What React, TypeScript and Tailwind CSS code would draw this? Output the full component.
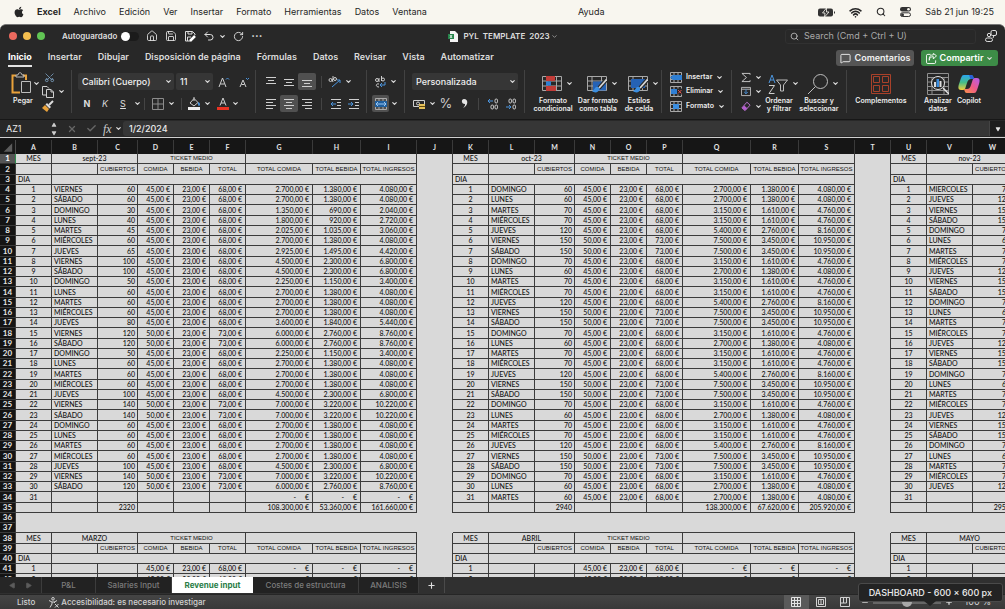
import React from 'react';
import { ChevronDown, Search, House, Save, Undo2, RotateCw, MessageSquare, Wifi, Scissors, Play, Plus, Minus, X, Check } from 'lucide-react';
import { FaApple } from 'react-icons/fa';

const MENUS = ['Archivo', 'Edición', 'Ver', 'Insertar', 'Formato', 'Herramientas', 'Datos', 'Ventana'];
const RIBBON_TABS = ['Inicio', 'Insertar', 'Dibujar', 'Disposición de página', 'Fórmulas', 'Datos', 'Revisar', 'Vista', 'Automatizar'];
const WEEK = ['LUNES', 'MARTES', 'MIÉRCOLES', 'JUEVES', 'VIERNES', 'SÁBADO', 'DOMINGO'];

interface Block {
  month: string;
  nextMonth: string;
  firstDay: number;
  covers: number[];
  // days whose average food ticket is 50 instead of 45
  highDays: number[];
  narrow?: boolean;
}

const BLOCKS: Block[] = [
  {
    month: 'sept-23',
    nextMonth: 'MARZO',
    firstDay: 4,
    covers: [60, 60, 30, 40, 45, 60, 65, 100, 100, 50, 60, 60, 60, 80, 120, 120, 50, 60, 60, 60, 100, 140, 140, 60, 60, 60, 60, 100, 140, 120],
    highDays: [15, 16, 22, 23, 29, 30],
  },
  {
    month: 'oct-23',
    nextMonth: 'ABRIL',
    firstDay: 6,
    covers: [60, 60, 70, 70, 120, 150, 150, 70, 60, 70, 70, 120, 150, 150, 70, 60, 70, 70, 120, 150, 150, 70, 60, 70, 70, 120, 150, 150, 70, 60, 60],
    highDays: [6, 7, 13, 14, 20, 21, 27, 28],
  },
  {
    month: 'nov-23',
    nextMonth: 'MAYO',
    firstDay: 2,
    covers: [70, 120, 150, 150, 70, 60, 70, 70, 120, 150, 150, 70, 60, 70, 70, 120, 150, 150, 70, 60, 70, 70, 120, 150, 150, 70, 60, 70, 70, 120],
    highDays: [3, 4, 10, 11, 17, 18, 24, 25],
    narrow: true,
  },
];

const COLUMNS: [string, string][] = [
  ['A', 'w-[36px]'], ['B', 'w-[46px]'], ['C', 'w-[40px]'], ['D', 'w-[36px]'], ['E', 'w-[36px]'], ['F', 'w-[36px]'],
  ['G', 'w-[67px]'], ['H', 'w-[48px]'], ['I', 'w-[56px]'], ['J', 'w-[36px]'],
  ['K', 'w-[36px]'], ['L', 'w-[46px]'], ['M', 'w-[40px]'], ['N', 'w-[36px]'], ['O', 'w-[36px]'], ['P', 'w-[36px]'],
  ['Q', 'w-[68px]'], ['R', 'w-[48px]'], ['S', 'w-[56px]'], ['T', 'w-[36px]'],
  ['U', 'w-[36px]'], ['V', 'w-[46px]'], ['W', 'w-[40px]'],
];

const money = (n: number) => {
  if (n === 0) return '-\u00a0\u00a0\u00a0\u00a0\u00a0€';
  return n.toString().replace(/\B(?=(\d{3})+$)/g, '.') + ',00 €';
};

const sum = (list: number[]) => list.reduce((a, b) => a + b, 0);

/* ---------- Sheet ---------- */

const Cell = ({ children, span, align = 'center', heading }: any) => {
  const alignClass = align === 'left' ? 'text-left pl-[2px]' : align === 'right' ? 'text-right pr-[2px]' : align === 'money' ? 'text-right pr-[3px]' : 'text-center';
  return <td colSpan={span} className={`border-r border-b border-[#3c3c3c] ${alignClass} ${heading ? "font-['Liberation_Sans',sans-serif] text-[6px]" : ''}`}>{children}</td>;
};

const DayCells = ({ block, day, empty }: { block: Block; day: number; empty: boolean }) => {
  const covers = empty ? 0 : block.covers[day - 1] || 0;
  const food = block.highDays.includes(day) && !empty ? 50 : 45;
  let name = covers ? WEEK[(block.firstDay + day - 1) % 7] : '';
  if (block.narrow && day === 1 && !empty) name = 'MIERCOLES';
  const hasTicket = covers > 0 || empty;
  return (
    <>
      <Cell>{day}</Cell>
      <Cell align="left">{name}</Cell>
      <Cell align="right">{covers || ''}</Cell>
      {!block.narrow && (
        <>
          <Cell align="money">{hasTicket && money(food)}</Cell>
          <Cell align="money">{hasTicket && money(23)}</Cell>
          <Cell align="money">{hasTicket && money(food + 23)}</Cell>
          <Cell align="money">{money(covers * food)}</Cell>
          <Cell align="money">{money(covers * 23)}</Cell>
          <Cell align="money">{money(covers * (food + 23))}</Cell>
        </>
      )}
    </>
  );
};

const BlockCells = ({ block, row }: { block: Block; row: number }) => {
  const local = row > 37 ? row - 37 : row;
  if (row === 36) return <td colSpan={block.narrow ? 3 : 9} />;
  if (row === 37) return <td colSpan={block.narrow ? 3 : 9} className="border-b border-[#3c3c3c]" />;
  if (local === 1) {
    return (
      <>
        <Cell>MES</Cell>
        <Cell span={2}>{row === 1 ? block.month : block.nextMonth}</Cell>
        {!block.narrow && <><Cell span={3} heading>TICKET MEDIO</Cell><Cell span={3} /></>}
      </>
    );
  }
  if (local === 2) {
    const heads = ['', '', 'CUBIERTOS', 'COMIDA', 'BEBIDA', 'TOTAL', 'TOTAL COMIDA', 'TOTAL BEBIDA', 'TOTAL INGRESOS'];
    return <>{heads.slice(0, block.narrow ? 3 : 9).map((h, i) => <Cell key={i} heading>{h}</Cell>)}</>;
  }
  if (local === 3) {
    return <><Cell align="left">DIA</Cell><Cell span={block.narrow ? 2 : 8} /></>;
  }
  if (local === 35) {
    const covers = sum(block.covers);
    const food = sum(block.covers.map((c, i) => c * (block.highDays.includes(i + 1) ? 50 : 45)));
    return (
      <>
        <Cell /><Cell />
        <Cell align="right">{covers}</Cell>
        {!block.narrow && (
          <>
            <Cell /><Cell /><Cell />
            <Cell align="money">{money(food)}</Cell>
            <Cell align="money">{money(covers * 23)}</Cell>
            <Cell align="money">{money(food + covers * 23)}</Cell>
          </>
        )}
      </>
    );
  }
  return <DayCells block={block} day={local - 3} empty={row > 37} />;
};

const Sheet = () => (
  <div className="flex-1 min-h-0 overflow-hidden bg-[#d9d9d9]">
    <table className="table-fixed w-[1013px] border-separate border-spacing-0 font-['Lato','Liberation_Sans',sans-serif] text-[7px] leading-[9px] font-medium text-[#111] whitespace-nowrap">
      <colgroup>
        <col className="w-[16px]" />
        {COLUMNS.map(([name, width]) => <col key={name} className={width} />)}
      </colgroup>
      <thead>
        <tr className="h-[14px] bg-[#161616] text-[#e4e4e4]">
          <th className="border-r border-[#4a4a4a]" aria-label="Seleccionar todo">
            <svg viewBox="0 0 16 14" className="block w-[15px] h-[14px]"><path d="M13 3v9H4z" fill="#5c5c5c" /></svg>
          </th>
          {COLUMNS.map(([name]) => <th key={name} scope="col" className="border-r border-[#3a3a3a] font-bold">{name}</th>)}
        </tr>
      </thead>
      <tbody>
        {Array.from({ length: 42 }, (_, i) => i + 1).map((row) => (
          <tr key={row} className={row % 4 === 2 ? 'h-[11px]' : 'h-[10px]'}>
            <th scope="row" className={`border-r border-b text-[8px] font-bold ${row === 1 ? 'bg-[#555] text-white border-b-[#333] border-r-[#2f8f4e]' : 'bg-[#141414] text-[#e4e4e4] border-[#3a3a3a]'}`}>{row}</th>
            {BLOCKS.map((block, i) => (
              <React.Fragment key={block.month}>
                <BlockCells block={block} row={row} />
                {i < 2 && <td className={row === 36 || row === 37 ? '' : 'border-r border-[#3c3c3c]'} />}
              </React.Fragment>
            ))}
          </tr>
        ))}
      </tbody>
    </table>
  </div>
);

/* ---------- Ribbon pieces ---------- */

const Chevron = ({ className = '' }: { className?: string }) => (
  <ChevronDown size={7} strokeWidth={4} className={`shrink-0 text-[#dedede] ${className}`} />
);

const Sep = () => <div className="w-px h-3 bg-[#444] shrink-0" />;

const Group = ({ width, children, className = '' }: any) => (
  <div className={`shrink-0 border-r border-[#424242] h-[43px] ${width} ${className}`}>{children}</div>
);

const Tool = ({ label, width = 'w-[18px]', active, children }: any) => (
  <button aria-label={label} className={`${width} h-[17px] shrink-0 flex items-center justify-center rounded-[2px] ${active ? 'bg-[#505050]' : ''}`}>{children}</button>
);

const Dropdown = ({ label, value, width }: any) => (
  <div className={`relative h-[17px] ${width}`}>
    <select aria-label={label} className="block appearance-none w-full h-[17px] leading-[17px] rounded-[2px] bg-[#363636] text-[#f0f0f0] text-[9px] font-medium pl-1 outline-none">
      <option>{value}</option>
    </select>
    <Chevron className="absolute right-[2px] top-[5px] pointer-events-none" />
  </div>
);

const BigTool = ({ lines, icon, width, chevron }: any) => (
  <button className={`flex flex-col items-center shrink-0 ${width}`}>
    <span className={`flex items-center gap-1 h-[27px] ${chevron ? 'pl-2' : ''}`}>{icon}{chevron && <Chevron />}</span>
    {lines.map((line: string) => <span key={line} className="text-[7px] leading-[8px] font-semibold text-[#ececec] whitespace-nowrap">{line}</span>)}
  </button>
);

const Lines = ({ rows }: { rows: [number, number, number][] }) => (
  <svg viewBox="0 0 12 12" className="w-3 h-3" stroke="#cfcfcf" strokeWidth="1">
    {rows.map(([x1, x2, y]) => <path key={y} d={`M${x1} ${y}H${x2}`} />)}
  </svg>
);

const IndentIcon = ({ out }: { out?: boolean }) => (
  <svg viewBox="0 0 12 12" className="w-3 h-3" fill="none" stroke="#cfcfcf">
    <path d="M1 1.500h10M7 4.500h4M7 7.500h4M1 10.500h10" />
    <path d={out ? 'M6 6H1m2-2L1 6l2 2' : 'M0 6h5M3 4l2 2-2 2'} stroke="#4b94dc" />
  </svg>
);

const GridIcon = ({ kind }: { kind: 'cond' | 'table' | 'style' }) => (
  <svg viewBox="0 0 20 18" className="w-5 h-[18px]" fill="none">
    <path d="M.5 1.500h19v14H.5zM.5 6h19M.5 11h19M5 1.500v14M14.500 1.500v14" stroke="#a8a8a8" />
    {kind === 'cond' && <><path d="M4 1h9v5H4zM4 11h10v5H4z" fill="#c23c38" /><path d="M4 6.500h5v4H4z" fill="#2f7fd4" /></>}
    {kind === 'table' && <path d="M6 6.500h13v9H6z" fill="#2562b5" />}
    {kind === 'style' && <path d="M3 4h14v9H3z" fill="#2562b5" />}
    {kind !== 'cond' && <>
      <path d="M19 5 12 13" stroke="#282828" strokeWidth="4" />
      <path d="M19.500 4.500 12 13" stroke="#d8d8d8" strokeWidth="1.800" />
      <path d="M11 12c-3-1-3 3-6 4 3 3 8 1 7-3z" fill="#3b8ee0" />
    </>}
  </svg>
);

const CellsIcon = ({ kind }: { kind: number }) => (
  <svg viewBox="0 0 12 11" className="w-3 h-[11px]" fill="none">
    <path d="M.5.5h11v10H.5zM.5 3.500h11M.5 7.500h11M4 .5v10M8 .5v10" stroke="#a8a8a8" />
    {kind === 0 && <path d="M3 3h9v5H3L0 5.500z" fill="#2f7fd4" />}
    {kind === 1 && <><path d="M1 3h6v5H1z" fill="#2f7fd4" /><path d="M7 2.500h5v6H7z" fill="#282828" /><path d="m8 4 3.500 3.500m0-3.500L8 7.500" stroke="#e0524a" /></>}
    {kind === 2 && <path d="M3 3h6v5H3z" fill="#3b8ee0" />}
  </svg>
);

const DecimalIcon = ({ more }: { more?: boolean }) => (
  <svg viewBox="0 0 12 12" className="w-3 h-3" fill="none" stroke="#cfcfcf">
    <rect x="8" y="1" width="2.500" height="4" rx="1.200" />
    <rect x="8" y="7" width="2.500" height="4" rx="1.200" />
    {more ? <rect x="4" y="7" width="2.500" height="4" rx="1.200" /> : <rect x="4" y="1" width="2.500" height="4" rx="1.200" />}
    <path d={more ? 'M6 3H1m2-2L1 3l2 2' : 'M1 9h5M4 7l2 2-2 2'} stroke="#4b94dc" />
  </svg>
);

const Ribbon = () => (
  <div className="flex pt-[2px] h-[51px] shrink-0 overflow-hidden">
    <Group width="w-[72px]" className="flex pl-[8px]">
      <button className="flex flex-col items-center w-[30px]">
        <span className="flex items-center gap-[2px] h-[26px] pl-1">
          <svg viewBox="0 0 20 22" className="w-5 h-[22px]" fill="none">
            <path d="M5 3.500H1.500v17H9M12 3.500h3V8" stroke="#e9a23b" strokeWidth="2" />
            <path d="M5 5V3h2c0-3 4-3 4 0h2v2z" stroke="#bdbdbd" />
            <path d="M10.500 9.500h9v11h-9z" stroke="#bdbdbd" fill="#282828" />
          </svg>
          <Chevron />
        </span>
        <span className="text-[7px] leading-[10px] font-semibold text-[#ececec]">Pegar</span>
      </button>
      <div className="flex flex-col pl-1 justify-between">
        <button aria-label="Cortar" className="h-[14px] pl-[2px]"><Scissors size={11} strokeWidth={1.500} className="-rotate-90 text-[#8db7dd]" /></button>
        <button aria-label="Copiar" className="h-[14px] flex items-center gap-1">
          <svg viewBox="0 0 12 12" className="w-3 h-3" fill="none" stroke="#cfcfcf"><path d="M4 9H.5V.5H5L7 2.500" /><path d="M4.500 3.500H9l2.500 2.500v5.500h-7zM9 3.500V6h2.500" /></svg>
          <Chevron />
        </button>
        <button aria-label="Copiar formato" className="h-[14px]">
          <svg viewBox="0 0 12 12" className="w-3 h-3"><path d="m11 1-4 4" stroke="#ddd" strokeWidth="2" /><path d="m5 3 4 4-1.500 1.500-4-4z" fill="#ddd" /><path d="m3 5 4 4-2 3-5-4z" fill="#e9a23b" /></svg>
        </button>
      </div>
    </Group>

    <Group width="w-[184px]" className="pl-[6px] flex flex-col gap-[5px]">
      <div className="flex items-center gap-[2px] pt-[3px]">
        <Dropdown label="Fuente" value="Calibri (Cuerpo)" width="w-[96px]" />
        <Dropdown label="Tamaño" value="11" width="w-[37px]" />
        <Tool label="Aumentar tamaño">
          <svg viewBox="0 0 12 12" className="w-3 h-3" fill="none"><path d="m1 11 3.500-9L8 11M2.500 8h4" stroke="#cfcfcf" /><path d="m8 3.500 1.500-1.500L11 3.500" stroke="#4b94dc" /></svg>
        </Tool>
        <Tool label="Reducir tamaño">
          <svg viewBox="0 0 12 12" className="w-3 h-3" fill="none"><path d="m2 11 3-7 3 7M3.500 8.500h3" stroke="#cfcfcf" /><path d="m8 2 1.500 1.500L11 2" stroke="#4b94dc" /></svg>
        </Tool>
      </div>
      <div className="flex items-center text-[9px] text-[#dedede]">
        <Tool label="Negrita"><b>N</b></Tool>
        <Tool label="Cursiva"><i>K</i></Tool>
        <Tool label="Subrayado"><u>S</u></Tool>
        <Tool label="Más subrayados" width="w-[10px]"><Chevron /></Tool>
        <div className="pl-[2px]"><Sep /></div>
        <Tool label="Bordes" width="w-[36px]">
          <svg viewBox="0 0 12 12" className="w-3 h-3 mr-1" fill="none" stroke="#8c8c8c"><path d="M.5.5h11v11H.5zM6 .5v11M.5 6h11" /></svg><Chevron />
        </Tool>
        <Sep />
        <Tool label="Color de relleno" width="w-[34px]">
          <svg viewBox="0 0 13 13" className="w-[13px] h-[13px] mr-[3px]" fill="none"><path d="M6 1.500 2 6l4 3 4-3.500zM6 4V0" stroke="#cfcfcf" /><path d="M10 5c3 1 2 4 1 4s-1-2-1-4z" fill="#4b94dc" /><path d="M0 10h12v3H0z" fill="#eee" /></svg><Chevron />
        </Tool>
        <Tool label="Color de fuente" width="w-[24px]">
          <svg viewBox="0 0 12 13" className="w-3 h-[13px] mr-[3px]" fill="none"><path d="M3 8.500 6 1l3 7.500M4 6h4" stroke="#cfcfcf" /><path d="M0 10h12v3H0z" fill="#ea3323" /></svg><Chevron />
        </Tool>
      </div>
    </Group>

    <Group width="w-[111px]" className="pl-[6px] flex flex-col gap-[5px]">
      <div className="flex items-center pt-[3px]">
        <Tool label="Alinear arriba"><Lines rows={[[1, 11, 1.5], [3, 9, 4.5], [1, 11, 7.5]]} /></Tool>
        <Tool label="Alinear en el medio"><Lines rows={[[1, 11, 3.5], [3, 9, 6.5], [1, 11, 9.5]]} /></Tool>
        <Tool label="Alinear abajo" active><Lines rows={[[1, 11, 4.5], [3, 9, 7.5], [1, 11, 10.5]]} /></Tool>
        <div className="px-[5px]"><Sep /></div>
        <Tool label="Orientación" width="w-[26px]">
          <svg viewBox="0 0 13 12" className="w-[13px] h-3 mr-1" fill="none"><circle cx="2.500" cy="4" r="1.500" stroke="#cfcfcf" /><circle cx="7" cy="3" r="1.500" stroke="#cfcfcf" /><path d="m4 3 1 3M5 0v4" stroke="#cfcfcf" /><path d="m4 11 8-7M9 4h3v3" stroke="#4b94dc" /></svg><Chevron />
        </Tool>
      </div>
      <div className="flex items-center">
        <Tool label="Alinear a la izquierda"><Lines rows={[[1, 11, 1.5], [1, 8, 4.5], [1, 11, 7.5], [1, 8, 10.5]]} /></Tool>
        <Tool label="Centrar" active><Lines rows={[[1, 11, 1.5], [3, 9, 4.5], [1, 11, 7.5], [3, 9, 10.5]]} /></Tool>
        <Tool label="Alinear a la derecha"><Lines rows={[[1, 11, 1.5], [4, 11, 4.5], [1, 11, 7.5], [4, 11, 10.5]]} /></Tool>
        <div className="px-[5px]"><Sep /></div>
        <Tool label="Disminuir sangría"><IndentIcon out /></Tool>
        <Tool label="Aumentar sangría"><IndentIcon /></Tool>
      </div>
    </Group>

    <Group width="w-[38px]" className="pl-[5px] flex flex-col gap-[5px]">
      <div className="flex items-center pt-[3px]">
        <Tool label="Ajustar texto" width="w-[26px]">
          <svg viewBox="0 0 12 12" className="w-3 h-3 mr-1" fill="none" stroke="#cfcfcf"><circle cx="3" cy="4" r="1.500" /><path d="M5 2v4M7.500 0v5" /><circle cx="9" cy="3.500" r="1.500" /><path d="M5 8c-3-1-4 3 0 3" /><path d="M11 6v3H6m2-2L6 9l2 2" stroke="#4b94dc" /></svg><Chevron />
        </Tool>
      </div>
      <Tool label="Combinar y centrar" width="w-[26px]">
        <span className="flex items-center justify-center w-[17px] h-[17px] mr-[2px] bg-[#505050] rounded-[2px]">
          <svg viewBox="0 0 12 12" className="w-3 h-3" fill="none"><path d="M.5.5h11v11H.5zM4 .5v11M8 .5v11" stroke="#aaa" /><path d="M0 3h12v6H0z" fill="#1f5f9f" /><path d="M1 6h10M3 4 1 6l2 2M9 4l2 2-2 2" stroke="#9cc8f2" /></svg>
        </span>
        <Chevron />
      </Tool>
    </Group>

    <Group width="w-[120px]" className="pl-[7px] flex flex-col gap-[5px]">
      <div className="pt-[3px]"><Dropdown label="Formato de número" value="Personalizada" width="w-[106px]" /></div>
      <div className="flex items-center text-[#cfcfcf]">
        <Tool label="Moneda" width="w-[25px]">
          <svg viewBox="0 0 12 12" className="w-3 h-3 mr-1" fill="none"><path d="M.5 2.500h11v6H.5z" stroke="#cfcfcf" /><circle cx="5" cy="5.500" r="1.500" stroke="#cfcfcf" /><path d="M6 6h6v5H6z" fill="#e6c15a" /><path d="M6 8.500h6" stroke="#614a10" /></svg><Chevron />
        </Tool>
        <Tool label="Porcentaje"><span className="text-[13px]">%</span></Tool>
        <Tool label="Estilo millares"><svg viewBox="0 0 8 12" className="w-2 h-3"><path d="M4 1c5 0 4 7-1 9 2-2 2-3 2-4-4 0-4-5-1-5z" fill="#e4e4e4" /></svg></Tool>
        <div className="px-[5px]"><Sep /></div>
        <Tool label="Aumentar decimales"><DecimalIcon more /></Tool>
        <Tool label="Disminuir decimales"><DecimalIcon /></Tool>
      </div>
    </Group>

    <Group width="w-[137px]" className="flex pl-[6px]">
      <BigTool chevron width="w-[44px]" icon={<GridIcon kind="cond" />} lines={['Formato', 'condicional']} />
      <BigTool chevron width="w-[46px]" icon={<GridIcon kind="table" />} lines={['Dar formato', 'como tabla']} />
      <BigTool chevron width="w-[36px]" icon={<GridIcon kind="style" />} lines={['Estilos', 'de celda']} />
    </Group>

    <Group width="w-[70px]" className="flex flex-col justify-between pl-2">
      {['Insertar', 'Eliminar', 'Formato'].map((label, i) => (
        <button key={label} className="flex items-center gap-[4px] h-[14px] text-[7px] font-semibold text-[#ececec]">
          <CellsIcon kind={i} />{label}<Chevron />
        </button>
      ))}
    </Group>

    <Group width="w-[115px]" className="flex pl-[9px]">
      <div className="flex flex-col justify-between w-[21px]">
        <button aria-label="Autosuma" className="flex items-center gap-1 h-[14px]">
          <svg viewBox="0 0 11 11" className="w-[11px] h-[11px]" fill="none" stroke="#cfcfcf"><path d="M10 2.500V1H1l5 4.500L1 10h9V8.500" /></svg><Chevron />
        </button>
        <button aria-label="Rellenar" className="flex items-center gap-1 h-[14px]">
          <svg viewBox="0 0 11 11" className="w-[11px] h-[11px]" fill="none"><path d="M.5 1h10v9H.5zM.5 3h10" stroke="#bdbdbd" /><path d="M5.500 3v5M3.500 6l2 2 2-2" stroke="#4b94dc" /></svg><Chevron />
        </button>
        <button aria-label="Borrar" className="flex items-center gap-1 h-[14px]">
          <svg viewBox="0 0 11 11" className="w-[11px] h-[11px]" fill="none"><path d="M6.500.8 10 4 4.500 10 1 7z" stroke="#c678dd" /><path d="M3.500 4.500 7 7.500 4.500 10 1 7z" fill="#b45fcf" /></svg><Chevron />
        </button>
      </div>
      <BigTool chevron width="w-[34px]" lines={['Ordenar', 'y filtrar']} icon={
        <svg viewBox="0 0 20 20" className="w-5 h-5" fill="none">
          <path d="M1 9 4 1l3 8M2 6h4" stroke="#4b94dc" />
          <path d="M1 11.500h5.500L1 19.500h5.500" stroke="#cfcfcf" />
          <path d="M8.500 6h11l-4 5v6h-3v-6z" stroke="#bdbdbd" />
        </svg>
      } />
      <BigTool chevron width="w-[46px]" lines={['Buscar y', 'seleccionar']} icon={
        <svg viewBox="0 0 20 20" className="w-5 h-5" fill="none" stroke="#bdbdbd"><circle cx="12.500" cy="7.500" r="7" /><path d="M7.500 12.500 0 20" /></svg>
      } />
    </Group>

    <Group width="w-[69px]" className="flex justify-center">
      <BigTool width="w-[60px]" lines={['Complementos']} icon={
        <svg viewBox="0 0 20 20" className="w-5 h-5" fill="none" stroke="#a8412a"><path d="M.5.5h19v19H.5z" /><path d="M2.500 2.500h6v6h-6zM11.500 2.500h6v6h-6zM2.500 11.500h6v6h-6zM11.500 11.500h6v6h-6z" /></svg>
      } />
    </Group>

    <div className="flex pl-[5px] flex-1">
      <BigTool width="w-[34px]" lines={['Analizar', 'datos']} icon={
        <svg viewBox="0 0 22 22" className="w-[22px] h-[22px]" fill="none">
          <path d="M.5.5h21v21H.5zM.5 4.500h21M.5 9h21M.5 13.500h21M.5 17.500h21M5 4v17M17 4v17" stroke="#8f8f8f" />
          <circle cx="11" cy="10" r="6.500" fill="#282828" stroke="#e4e4e4" /><path d="m16 15 6 6" stroke="#e4e4e4" strokeWidth="1.500" />
          <path d="M7 9h2v5H7zM12.500 8h2v6h-2z" fill="#ddd" /><path d="M9.500 6h2.500v8H9.500z" fill="#3b8ee0" />
        </svg>
      } />
      <BigTool width="w-[28px]" lines={['Copilot']} icon={
        <svg viewBox="0 0 22 22" className="w-[22px] h-[22px]">
          <defs>
            <linearGradient id="cool" x1="0" y1="0" x2="0" y2="1"><stop offset="0" stopColor="#2aa5ef" /><stop offset=".5" stopColor="#46bd88" /><stop offset="1" stopColor="#f3cf3b" /></linearGradient>
            <linearGradient id="warm" x1="1" y1="0" x2="0" y2="1"><stop offset="0" stopColor="#b35cf0" /><stop offset=".5" stopColor="#ee5a8a" /><stop offset="1" stopColor="#fb9246" /></linearGradient>
          </defs>
          <path d="M6 2h7c2 0 2 1 3 4h-3c-2 0-3 1-4 4l-1 3c-1 3-1 4-3 4H3c-3 0-3-3-2-6l2-6c1-2 1-3 3-3z" fill="url(#cool)" />
          <path d="M16 20H9c-2 0-2-1-3-4h3c2 0 3-1 4-4l1-3c1-3 1-4 3-4h2c3 0 3 3 2 6l-2 6c-1 2-1 3-3 3z" fill="url(#warm)" />
          <path d="M11 2h2c2 0 2 1 3 4h-3c-1 0-1-2-2-4z" fill="#2b5fd9" />
        </svg>
      } />
    </div>
  </div>
);

/* ---------- Window chrome ---------- */

const MenuBar = () => (
  <header className="flex items-center h-6 shrink-0 bg-[#f8f6ef] text-[#262626] text-[9px] pl-[13px] pr-[11px]">
    <FaApple size={12} className="mr-3" />
    <nav className="flex items-center gap-[13px]">
      <button className="font-bold">Excel</button>
      {MENUS.map((m) => <button key={m}>{m}</button>)}
    </nav>
    <button className="ml-[151px]">Ayuda</button>
    <div className="ml-auto flex items-center gap-[14px]">
      <svg viewBox="0 0 17 9" className="w-[17px] h-[9px]"><rect x="0" y=".5" width="15" height="8" rx="2" fill="#333" /><path d="M16 3v3l1-1V4z" fill="#333" /><path d="M8.500 0 4.500 5H7l-.5 4L11 4H8.500z" fill="#333" stroke="#f8f6ef" strokeWidth=".8" /></svg>
      <Wifi size={13} strokeWidth={3} />
      <Search size={10} strokeWidth={2.500} />
      <svg viewBox="0 0 11 10" className="w-[11px] h-[10px]"><rect width="11" height="4.500" rx="2.200" fill="#333" /><circle cx="8.500" cy="2.200" r="1.300" fill="#f8f6ef" /><rect x=".5" y="5.800" width="10" height="3.700" rx="1.800" fill="none" stroke="#333" /><circle cx="2.500" cy="7.700" r="1.500" fill="#333" /></svg>
      <span>Sáb 21 jun 19:25</span>
    </div>
  </header>
);

const TitleBar = () => (
  <div className="flex items-center h-[22px] shrink-0 pl-[9px] pr-[8px] text-[#dedede]">
    <div className="flex-1 flex items-center">
      <div className="flex gap-[6px] mr-[17px]">
        <button aria-label="Cerrar" className="w-2 h-2 rounded-full bg-[#ec6a5e]" />
        <button aria-label="Minimizar" className="w-2 h-2 rounded-full bg-[#f5bf4f]" />
        <button aria-label="Ampliar" className="w-2 h-2 rounded-full bg-[#61c554]" />
      </div>
      <label className="flex items-center gap-1 text-[8px] font-semibold">
        Autoguardado
        <span className="flex items-center w-[18px] h-[9px] rounded-full bg-[#1b1b1b]">
          <input type="checkbox" role="switch" className="appearance-none w-[9px] h-[9px] rounded-full bg-white" />
        </span>
      </label>
      <div className="flex items-center gap-[7px] ml-[7px]">
        <button aria-label="Inicio"><House size={12} strokeWidth={1.800} /></button>
        <button aria-label="Guardar"><Save size={12} strokeWidth={1.800} /></button>
        <button aria-label="Guardar como" className="flex">
          <svg viewBox="0 0 12 12" className="w-3 h-3" fill="none" stroke="#dedede"><path d="M6 11H1.500V1.500h7L11 4v1M4 1.500V4h4V1.500M3.500 11V7H7" /><path d="m11 6-5 5" strokeWidth="2.500" stroke="#fff" /></svg>
        </button>
        <button aria-label="Deshacer" className="flex items-center gap-1"><Undo2 size={12} strokeWidth={2} /><Chevron /></button>
        <button aria-label="Rehacer"><RotateCw size={11} strokeWidth={2} /></button>
        <button aria-label="Más" className="text-[11px] leading-3 font-bold">···</button>
      </div>
    </div>
    <button className="flex items-center gap-[5px] text-[8px] font-semibold whitespace-pre">
      <svg viewBox="0 0 10 11" className="w-[10px] h-[11px]"><path d="M2 0h5l3 3v8H2z" fill="#f4f4f4" /><path d="M0 3h6v5H0z" fill="#26854b" /><path d="m2 4 2 3m0-3L2 7" stroke="#fff" strokeWidth=".8" /></svg>
      <span>PYL  TEMPLATE  2023</span>
      <ChevronDown size={7} strokeWidth={3} className="-ml-1 text-[#9a9a9a]" />
    </button>
    <div className="flex-1 flex items-center justify-end gap-[9px]">
      <label className="flex items-center gap-[5px] w-[191px] h-[15px] pl-1 rounded-[3px] border border-[#313131] text-[#b0b0b0]">
        <Search size={9} strokeWidth={2.500} />
        <input aria-label="Buscar" placeholder="Search (Cmd + Ctrl + U)" className="flex-1 min-w-0 bg-transparent outline-none text-[9px] placeholder:text-[#a8a8a8]" />
      </label>
      <svg viewBox="0 0 12 12" className="w-3 h-3" fill="none" stroke="#dedede"><rect x="6" y=".5" width="5.500" height="5" rx="1.500" /><circle cx="4" cy="5" r="1.700" /><rect x=".5" y="8" width="7" height="3.500" rx="1.700" /><path d="M9 5.500 8 8" /></svg>
    </div>
  </div>
);

const RibbonTabs = () => (
  <div className="flex items-end h-[21px] shrink-0 pl-2 pr-[7px] text-[9px] font-semibold text-[#dcdcdc]">
    <nav className="flex gap-[16px] h-[19px] pb-px">
      {RIBBON_TABS.map((t, i) => (
        <button key={t} className={`whitespace-nowrap border-b-2 ${i === 0 ? 'border-[#e4e4e4] text-white font-bold' : 'border-transparent'}`}>{t}</button>
      ))}
    </nav>
    <div className="ml-auto flex gap-[7px] pb-[2px]">
      <button className="flex items-center justify-center gap-1 w-[78px] h-4 rounded-[3px] bg-[#555] text-[#f0f0f0]"><MessageSquare size={11} strokeWidth={2} />Comentarios</button>
      <button className="flex items-center justify-center gap-[3px] w-[77px] h-4 rounded-[3px] bg-[#3d8c47] text-white">
        <svg viewBox="0 0 12 12" className="w-[11px] h-[11px]" fill="none" stroke="#fff"><path d="M5 1.500H2a1.500 1.500 0 0 0-1.500 1.500v7A1.500 1.500 0 0 0 2 11.500h7a1.500 1.500 0 0 0 1.500-1.500V8" /><path d="M3.500 8C4 5 5.500 4 8 4V6.500L11.500 3 8 .5V2C5 2 3 4 3.500 8z" /></svg>
        Compartir<Chevron />
      </button>
    </div>
  </div>
);

const FormulaBar = () => (
  <div className="flex items-center h-[18px] shrink-0 border-t border-[#171717] text-[9px] text-[#ececec]">
    <input aria-label="Cuadro de nombres" defaultValue="AZ1" className="w-[50px] pl-[6px] h-full bg-transparent outline-none" />
    <div className="w-[8px] flex flex-col items-center gap-[2px]">
      <Play size={6} fill="#ccc" stroke="none" className="-rotate-90" />
      <Play size={6} fill="#ccc" stroke="none" className="rotate-90" />
    </div>
    <div className="flex items-center gap-[9px] ml-[9px] text-[#666]">
      <button aria-label="Cancelar"><X size={10} strokeWidth={3} /></button>
      <button aria-label="Aceptar"><Check size={11} strokeWidth={3} /></button>
    </div>
    <button aria-label="Insertar función" className="flex items-center gap-[3px] w-[20px] ml-[6px] font-['Liberation_Serif',serif] italic text-[12px] text-[#cfcfcf]">fx<Chevron /></button>
    <input aria-label="Barra de fórmulas" defaultValue="1/2/2024" className="flex-1 min-w-0 pl-[6px] h-[15px] rounded-l-[3px] bg-[#363636] font-medium outline-none" />
    <button aria-label="Expandir" className="w-4 h-[15px] flex items-center justify-center bg-[#1e1e1e] border-l border-[#444]"><Play size={6} fill="#e4e4e4" stroke="none" className="rotate-90" /></button>
  </div>
);

const SheetTab = ({ width, active, children }: any) => (
  <button className={`h-[16px] shrink-0 ${width} ${active ? 'bg-white text-[#2a7d46] font-bold' : 'bg-[#222] text-[#7c7c7c] border-r border-[#3c3c3c]'}`}>{children}</button>
);

const Footer = () => (
  <footer className="shrink-0 relative">
    <div className="flex h-[17px] bg-[#303030] text-[8px] font-medium">
      <div className="flex items-center justify-center gap-[9px] w-[42px] h-[16px] bg-[#262626] border-r border-[#3c3c3c] text-[#5c5c5c]">
        <button aria-label="Hoja anterior"><Play size={7} fill="currentColor" className="rotate-180" /></button>
        <button aria-label="Hoja siguiente"><Play size={7} fill="currentColor" /></button>
      </div>
      <SheetTab width="w-[54px]">P&amp;L</SheetTab>
      <SheetTab width="w-[76px]">Salaries Input</SheetTab>
      <SheetTab width="w-[81px]" active>Revenue input</SheetTab>
      <SheetTab width="w-[106px]">Costes de estructura</SheetTab>
      <SheetTab width="w-[60px]">ANALISIS</SheetTab>
      <button aria-label="Nueva hoja" className="w-[26px] h-[16px] flex items-center justify-center border-r border-[#4a4a4a] text-[#e0e0e0]"><Plus size={9} strokeWidth={3} /></button>
    </div>
    <div className="flex items-center h-[15px] border-t border-[#262626] bg-linear-to-b from-[#454545] to-[#393939] text-[8px] text-[#d2d2d2] pl-[17px] pr-[14px] overflow-hidden">
      <span className="font-medium">Listo</span>
      <button className="flex items-center gap-[2px] ml-[13px] font-medium">
        <svg viewBox="0 0 11 11" className="w-[11px] h-[11px]" fill="none" stroke="#d2d2d2"><circle cx="5" cy="1.800" r="1.300" /><path d="M1 3.500 4 5v2l-2 3.500M9 3.500 6.500 5v1M4 5h3M7 7l3.500 3.500m0-3.500L7 10.500" /></svg>
        Accesibilidad: es necesario investigar
      </button>
      <div className="ml-auto flex items-center">
        <button aria-label="Normal" className="w-[25px] h-[15px] flex items-center justify-center bg-[#5a5a5a]">
          <svg viewBox="0 0 10 10" className="w-[10px] h-[10px]" fill="none" stroke="#e4e4e4"><path d="M.5.5h9v9H.5zM3.500 0v10M6.500 0v10M0 3.500h10M0 6.500h10" /></svg>
        </button>
        <button aria-label="Diseño de página" className="w-[24px] flex justify-center">
          <svg viewBox="0 0 10 10" className="w-[10px] h-[10px]" fill="none" stroke="#d2d2d2"><path d="M.5.5h9v9H.5zM2.500 2.500h5v5h-5zM4 4h2M4 6h2" /></svg>
        </button>
        <button aria-label="Salto de página" className="w-[24px] flex justify-center">
          <svg viewBox="0 0 10 10" className="w-[10px] h-[10px]" fill="none" stroke="#d2d2d2"><path d="M.5.5h9v9H.5zM3.500 0v6M6.500 0v6H0" /></svg>
        </button>
        <button aria-label="Alejar" className="w-[16px] flex justify-center"><Minus size={8} strokeWidth={4} /></button>
        <input type="range" aria-label="Zoom" defaultValue={50} className="appearance-none w-[68px] h-1 bg-[#666] [&::-webkit-slider-thumb]:appearance-none [&::-webkit-slider-thumb]:w-[10px] [&::-webkit-slider-thumb]:h-[10px] [&::-webkit-slider-thumb]:rounded-full [&::-webkit-slider-thumb]:bg-[#a8a8a8]" />
        <button aria-label="Acercar" className="w-[16px] flex justify-center"><Plus size={8} strokeWidth={4} /></button>
        <span className="ml-2 text-[9px]">100 %</span>
      </div>
    </div>
    {/* Floating label with its pointer */}
    <div role="tooltip" className="absolute right-[2px] bottom-[7px] h-[19px] px-[10px] flex items-center rounded-[3px] border border-[#4a4a4a] bg-[#232323] text-[#ececec] text-[9px] font-medium whitespace-nowrap">
      DASHBOARD - 600 × 600 px
      <svg viewBox="0 0 12 6" className="absolute left-1/2 top-full -translate-x-1/2 w-3 h-[6px]"><path d="M0 0h12L6 5z" fill="#232323" /></svg>
    </div>
  </footer>
);

export default function App() {
  return (
    <div className="flex flex-col h-screen overflow-hidden bg-[#f8f6ef] font-['Inter','Liberation_Sans',sans-serif]">
      <MenuBar />
      <main className="flex-1 min-h-0 flex flex-col rounded-t-[6px] border-t border-[#777] bg-[#282828] overflow-hidden">
        <TitleBar />
        <RibbonTabs />
        <Ribbon />
        <FormulaBar />
        <div className="h-[3px] shrink-0 bg-[#161616] border-t border-[#d0d0d0]" />
        <Sheet />
        <Footer />
      </main>
    </div>
  );
}
